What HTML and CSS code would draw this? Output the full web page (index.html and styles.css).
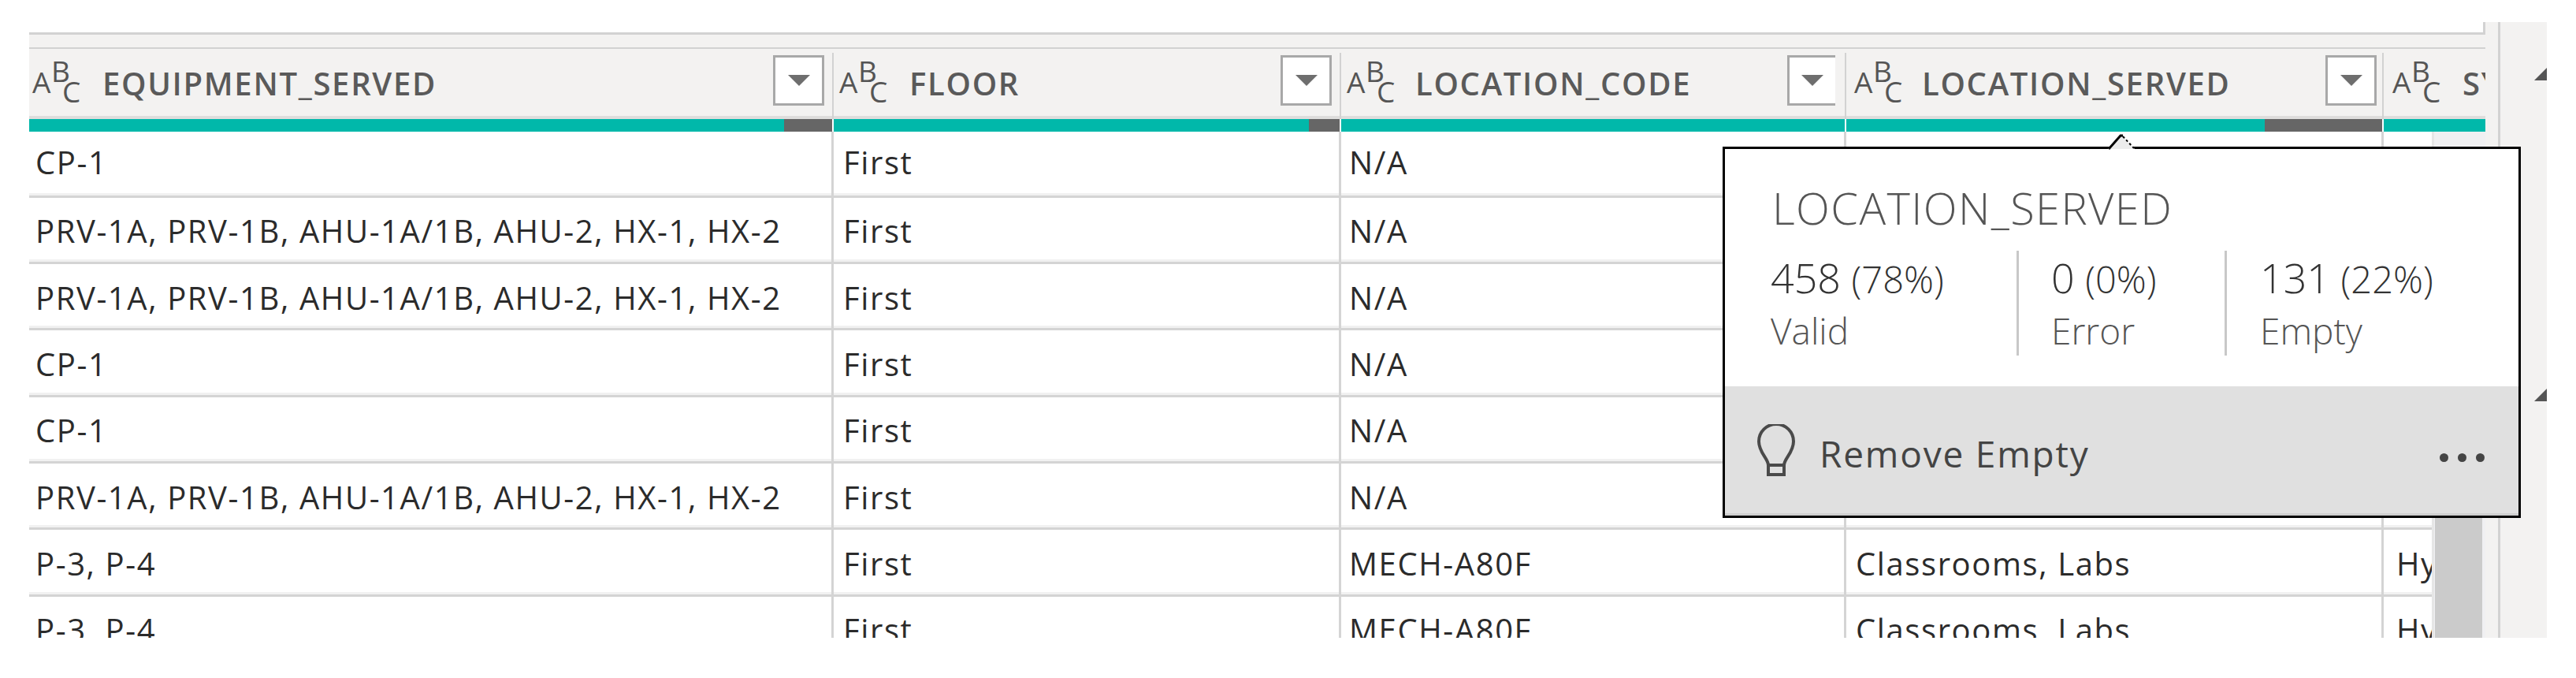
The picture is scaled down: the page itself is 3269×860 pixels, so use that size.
FILE: index.html
```html
<!DOCTYPE html>
<html lang="en">
<head>
    <meta charset="UTF-8">
    <title>Power Query - column quality</title>
    <link rel="stylesheet" href="styles.css">
</head>
<body>
    <div class="editor">
        <div class="query-pane">
            <div class="formula-strip"></div>
            <div class="band"></div>

            <div class="table-wrap">
                <div class="head-row">
                    <div class="head-cell col-1">
                        <svg class="abc" width="60" height="52"><text x="0" y="39">A</text><text x="24" y="25">B</text><text x="38" y="51">C</text></svg>
                        <span class="head-name">EQUIPMENT_SERVED</span>
                        <span class="filter"><i></i></span>
                    </div>
                    <div class="head-cell col-2">
                        <svg class="abc" width="60" height="52"><text x="0" y="39">A</text><text x="24" y="25">B</text><text x="38" y="51">C</text></svg>
                        <span class="head-name">FLOOR</span>
                        <span class="filter"><i></i></span>
                    </div>
                    <div class="head-cell col-3">
                        <svg class="abc" width="60" height="52"><text x="0" y="39">A</text><text x="24" y="25">B</text><text x="38" y="51">C</text></svg>
                        <span class="head-name">LOCATION_CODE</span>
                        <span class="filter"><i></i></span>
                    </div>
                    <div class="head-cell col-4">
                        <svg class="abc" width="60" height="52"><text x="0" y="39">A</text><text x="24" y="25">B</text><text x="38" y="51">C</text></svg>
                        <span class="head-name">LOCATION_SERVED</span>
                        <span class="filter"><i></i></span>
                    </div>
                    <div class="head-cell col-5">
                        <svg class="abc" width="60" height="52"><text x="0" y="39">A</text><text x="24" y="25">B</text><text x="38" y="51">C</text></svg>
                        <span class="head-name">SYSTEM</span>
                    </div>
                </div>

                <div class="quality-row">
                    <div class="quality"><span class="empty" style="width:61px"></span></div>
                    <div class="quality"><span class="empty" style="width:39px"></span></div>
                    <div class="quality"></div>
                    <div class="quality"><span class="empty" style="width:149px"></span></div>
                    <div class="quality"></div>
                </div>

                <div class="body-wrap">
                    <div class="rows">
                        <div class="row">
                            <div class="cell col-1">CP-1</div><div class="cell col-2">First</div><div class="cell col-3">N/A</div><div class="cell col-4"></div><div class="cell col-5"></div>
                        </div>
                        <div class="row">
                            <div class="cell col-1">PRV-1A, PRV-1B, AHU-1A/1B, AHU-2, HX-1, HX-2</div><div class="cell col-2">First</div><div class="cell col-3">N/A</div><div class="cell col-4"></div><div class="cell col-5"></div>
                        </div>
                        <div class="row">
                            <div class="cell col-1">PRV-1A, PRV-1B, AHU-1A/1B, AHU-2, HX-1, HX-2</div><div class="cell col-2">First</div><div class="cell col-3">N/A</div><div class="cell col-4"></div><div class="cell col-5"></div>
                        </div>
                        <div class="row">
                            <div class="cell col-1">CP-1</div><div class="cell col-2">First</div><div class="cell col-3">N/A</div><div class="cell col-4"></div><div class="cell col-5"></div>
                        </div>
                        <div class="row">
                            <div class="cell col-1">CP-1</div><div class="cell col-2">First</div><div class="cell col-3">N/A</div><div class="cell col-4"></div><div class="cell col-5"></div>
                        </div>
                        <div class="row">
                            <div class="cell col-1">PRV-1A, PRV-1B, AHU-1A/1B, AHU-2, HX-1, HX-2</div><div class="cell col-2">First</div><div class="cell col-3">N/A</div><div class="cell col-4"></div><div class="cell col-5"></div>
                        </div>
                        <div class="row">
                            <div class="cell col-1">P-3, P-4</div><div class="cell col-2">First</div><div class="cell col-3">MECH-A80F</div><div class="cell col-4">Classrooms, Labs</div><div class="cell col-5">Hydronic</div>
                        </div>
                        <div class="row">
                            <div class="cell col-1">P-3, P-4</div><div class="cell col-2">First</div><div class="cell col-3">MECH-A80F</div><div class="cell col-4">Classrooms, Labs</div><div class="cell col-5">Hydronic</div>
                        </div>
                    </div>
                    <div class="scroll-track"><div class="scroll-thumb"></div></div>
                </div>
            </div>
        </div>

        <div class="side-pane">
            <div class="side-arrow"></div>
            <div class="side-arrow second"></div>
        </div>
    </div>

    <div class="tooltip">
        <svg class="tooltip-caret" width="36" height="20">
            <path d="M1 19 L18 2 L35 19 Z" fill="#ececec"/>
            <path d="M2 19 L17 2 L20 2" fill="none" stroke="#000" stroke-width="3"/>
            <path d="M20 3 L34 18" fill="none" stroke="#000" stroke-width="2" stroke-dasharray="3 3"/>
        </svg>
        <div class="tooltip-title">LOCATION_SERVED</div>
        <div class="stats">
            <div class="stat">
                <div class="stat-value">458 <small>(78%)</small></div>
                <div class="stat-label">Valid</div>
            </div>
            <div class="stat">
                <div class="stat-value">0 <small>(0%)</small></div>
                <div class="stat-label">Error</div>
            </div>
            <div class="stat">
                <div class="stat-value">131 <small>(22%)</small></div>
                <div class="stat-label">Empty</div>
            </div>
        </div>
        <div class="tooltip-foot">
            <svg class="bulb" width="48" height="66" viewBox="0 0 48 66">
                <path d="M14 64 V52 C14 44 2 36 2 22 A22 22 0 0 1 46 22 C46 36 34 44 34 52 V64 Z M14 52 H34" fill="none" stroke="#4a4a4a" stroke-width="4"/>
            </svg>
            <span class="foot-text">Remove Empty</span>
            <span class="dots"><i></i><i></i><i></i></span>
        </div>
    </div>
</body>
</html>
```

FILE: styles.css
```css
body {
    margin: 0;
    background: #fff;
    font-family: "Open Sans", "Noto Sans", sans-serif;
    color: #2b2b2b;
}
.editor {
    display: flex;
    margin: 28px 0 0 37px;
    width: 3195px;
    height: 781px;
    overflow: hidden;
}

/* left pane with the table */
.query-pane {
    width: 3136px;
    background: #f3f2f1;
    border-right: 3px solid #d2d2d2;
    box-sizing: border-box;
}
.formula-strip {
    width: 3117px;
    height: 16px;
    box-sizing: border-box;
    background: #fff;
    border-right: 3px solid #d2d2d2;
    border-bottom: 3px solid #d2d2d2;
}
.band {
    width: 3117px;
    height: 18px;
    box-sizing: border-box;
    border-bottom: 2px solid #d2d2d2;
}
.table-wrap {
    width: 3117px;
}
.head-row, .row {
    display: grid;
    grid-template-columns: 1021px 644px 641px 682px 1fr;
}
.head-row {
    height: 89px;
    box-shadow: inset 0 -4px 0 #dedddc;
}
.head-cell {
    display: flex;
    align-items: center;
    box-sizing: border-box;
    height: 84px;
    margin-top: 5px;
    border-right: 2px solid #d2d2d2;
    overflow: hidden;
    white-space: nowrap;
}
.head-cell.col-1 { padding-left: 4px; }
.head-cell.col-2 { padding-left: 7px; }
.head-cell.col-3 { padding-left: 7px; }
.head-cell.col-4 { padding-left: 10px; }
.head-cell.col-5 { padding-left: 11px; border-right: 0; }
.abc {
    flex: none;
    margin-top: -8px;
    margin-right: 29px;
    overflow: visible;
}
.col-3 .abc { margin-right: 27px; }
.col-4 .abc { margin-right: 26px; }
.abc text {
    font-family: "Open Sans", sans-serif;
    font-size: 37px;
    font-weight: 500;
    fill: #555;
}
.head-name {
    font-size: 40px;
    font-weight: 600;
    color: #5a5a5a;
    letter-spacing: 1.7px;
    margin-top: -8px;
}
.filter {
    display: flex;
    align-items: center;
    justify-content: center;
    box-sizing: border-box;
    width: 65px;
    height: 64px;
    margin: -14px 10px 0 auto;
    background: #fff;
    border: 3px solid #a8a8a8;
}
.filter i {
    width: 0;
    height: 0;
    border-left: 14px solid transparent;
    border-right: 14px solid transparent;
    border-top: 14px solid #6e6e6e;
}
.col-3 .filter {
    width: 61px;
    margin-right: 12px;
    border-right: 0;
}
.col-4 .filter {
    margin-right: 7px;
}
.quality-row {
    display: grid;
    grid-template-columns: 1021px 644px 641px 682px 1fr;
    height: 16px;
    background: #fff;
}
.quality {
    display: flex;
    justify-content: flex-end;
    margin-right: 2px;
    background: #01b8aa;
}
.quality:last-child {
    margin-right: 0;
}
.quality .empty {
    background: #666;
}

/* rows */
.body-wrap {
    display: flex;
    height: 642px;
}
.rows {
    width: 3049px;
    flex: none;
    background: #fff;
    overflow: hidden;
}
.row {
    height: 84.37px;
    box-sizing: border-box;
    border-bottom: 3px solid #d4d4d4;
    box-shadow: inset 0 -3px 0 #f1f1f1;
}
.row:first-child {
    height: 83.5px;
}
.cell {
    display: flex;
    align-items: center;
    box-sizing: border-box;
    padding-top: 3px;
    border-right: 3px solid #d4d4d4;
    font-size: 40px;
    letter-spacing: 1.6px;
    white-space: nowrap;
    overflow: hidden;
}
.cell.col-1 { padding-left: 8px; }
.cell.col-2 { padding-left: 12px; }
.cell.col-3 { padding-left: 10px; }
.cell.col-4 { padding-left: 12px; }
.cell.col-5 { padding-left: 16px; border-right: 0; }
.row:first-child .cell {
    padding-top: 0;
    padding-bottom: 4px;
}
.scroll-track {
    flex: 1;
    background: #f0f0f2;
    border-left: 3px solid #e6e6e6;
}
.scroll-thumb {
    width: 60px;
    height: 500px;
    margin: 142px 0 0 1px;
    background: #cbcbcb;
}

/* right pane */
.side-pane {
    width: 59px;
    background: #f3f2f1;
    padding-top: 58px;
    box-sizing: border-box;
}
.side-arrow {
    width: 0;
    height: 0;
    margin-left: 43px;
    border-left: 16px solid transparent;
    border-bottom: 16px solid #555;
}
.side-arrow.second {
    margin-top: 391px;
}

/* column quality popup */
.tooltip {
    position: absolute;
    left: 2186px;
    top: 186px;
    display: flex;
    flex-direction: column;
    box-sizing: border-box;
    width: 1013px;
    height: 471px;
    background: #fff;
    border: 3px solid #000;
}
.tooltip-caret {
    position: absolute;
    left: 485px;
    top: -19px;
}
.tooltip-title {
    padding: 41px 0 0 60px;
    font-size: 56px;
    font-weight: 300;
    line-height: 66px;
    letter-spacing: 1.4px;
    color: #555;
}
.stats {
    display: flex;
    height: 133px;
    margin: 22px 0 0 58px;
}
.stat {
    box-sizing: border-box;
    padding-top: 3px;
}
.stat:first-child {
    width: 315px;
    border-right: 3px solid #c8c8c8;
}
.stat:nth-child(2) {
    width: 264px;
    padding-left: 41px;
    border-right: 3px solid #c8c8c8;
}
.stat:nth-child(3) {
    padding-left: 42px;
}
.stat-value {
    font-size: 52px;
    font-weight: 300;
    line-height: 62px;
    color: #333;
    white-space: nowrap;
}
.stat-value small {
    font-size: 47px;
}
.stat-label {
    margin-top: 7px;
    font-size: 46px;
    font-weight: 300;
    line-height: 54px;
    color: #555;
}
.tooltip-foot {
    display: flex;
    align-items: center;
    height: 164px;
    margin-top: auto;
    padding: 0 43px 0 41px;
    box-sizing: border-box;
    background: #e0e0e0;
    border-bottom: 3px solid #cfcfcf;
}
.bulb {
    flex: none;
    margin-right: 31px;
}
.foot-text {
    margin-top: 9px;
    font-size: 46px;
    letter-spacing: 1.8px;
    color: #444;
}
.dots {
    display: flex;
    gap: 12px;
    margin: 19px 0 0 auto;
}
.dots i {
    width: 11px;
    height: 11px;
    border-radius: 50%;
    background: #444;
}
```
